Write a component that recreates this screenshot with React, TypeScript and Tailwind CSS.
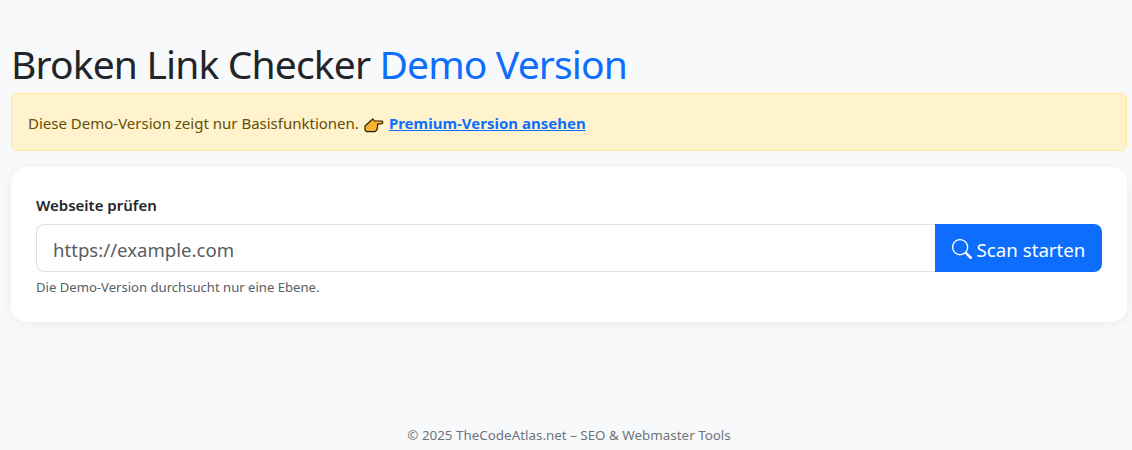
import { BsSearch } from "react-icons/bs"

function PointingHand() {
  return (
    <svg width="20" height="16" viewBox="0 0 20 16" className="mt-[2px] shrink-0">
      <path
        d="M1 9 L6.5 4 L9 2 L10.5 4 L18 4 Q19.5 5 18 6.6 L13.5 7.2 L13.6 10 L12.8 13 L11 14.6 L2.5 14.6 L1 13 Z"
        fill="#fbb034"
        stroke="#2a1c05"
        strokeWidth="1.2"
        strokeLinejoin="round"
      />
    </svg>
  )
}

export default function App() {
  return (
    <div className="min-h-[450px] bg-[#f8f9fb] pr-[5px] pl-[11px] pt-[40px] font-['Noto_Sans','Open_Sans',sans-serif] text-[#212529]">
      <h1 className="text-[39px] leading-[48px] font-normal tracking-[-0.85px]">
        Broken Link Checker <span className="text-[#0d6efd]">Demo Version</span>
      </h1>

      <div className="mt-[5px] flex h-[58px] items-center gap-[5px] rounded-md border border-[#ffe69c] bg-[#fff3cd] px-4 pt-[3px] text-[15px] text-[#664d03]">
        <span>Diese Demo-Version zeigt nur Basisfunktionen.</span>
        <PointingHand />
        <a href="#" className="font-bold text-[#0d6efd] underline">
          Premium-Version ansehen
        </a>
      </div>

      <div className="mt-4 h-[155px] rounded-2xl bg-white px-[25px] pt-[28px] shadow-[0_2px_12px_rgba(0,0,0,0.05)]">
        <label className="block text-[15px] leading-[20px] font-semibold">Webseite prüfen</label>
        <div className="mt-[9px] flex h-12">
          <input
            placeholder="https://example.com"
            className="min-w-0 flex-1 rounded-l-lg border border-r-0 border-[#dee2e6] bg-white px-4 pt-1 text-[18.6px] outline-none placeholder:text-[#595c5f]"
          />
          <button className="flex w-[167px] items-center justify-center gap-[5px] rounded-r-lg bg-[#0d6efd] text-[18.7px] text-white">
            <BsSearch size={20} className="mt-[1px]" />
            <span className="pt-1">Scan starten</span>
          </button>
        </div>
        <p className="mt-[6px] text-[13.1px] leading-[18px] text-[#565e64]">
          Die Demo-Version durchsucht nur eine Ebene.
        </p>
      </div>

      <footer className="mt-[104px] text-center text-[13.4px] leading-[18px] text-[#6c757d]">
        © 2025 TheCodeAtlas.net – SEO &amp; Webmaster Tools
      </footer>
    </div>
  )
}
